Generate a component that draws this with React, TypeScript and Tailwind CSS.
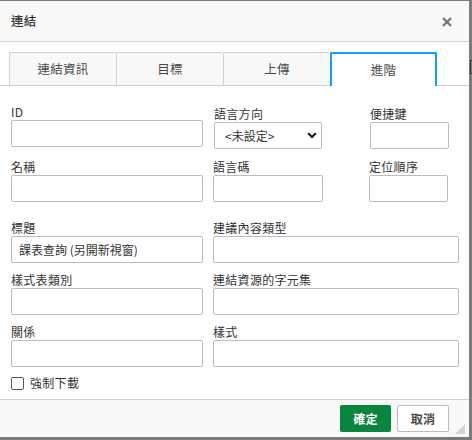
import React from "react";

const font = { fontFamily: '"Noto Sans CJK TC", "Liberation Sans", sans-serif' };

const Field = ({ label, width, value, className = "" }: { label: string; width: string; value?: string; className?: string }) => (
  <div className={`flex flex-col ${className}`}>
    <label className="h-[17px] text-[12px] leading-[17px] text-[#333] tracking-[0.3px]">{label}</label>
    <input
      readOnly
      value={value ?? ""}
      className={`${width} h-[27px] rounded-[2px] border border-[#bcbcbc] bg-white px-[7px] text-[12px] text-[#333] outline-none`}
    />
  </div>
);

const tabs = ["連結資訊", "目標", "上傳", "進階"];

export default function App() {
  return (
    <div className="relative h-[440px] w-[472px] overflow-hidden bg-[#7b7b7b] pt-[1px]" style={font}>
      {/* 後面頁面露出的一角 */}
      <div className="absolute left-[470px] top-[60px] h-[14px] w-[6px] border border-[#333]" />

      <div className="flex h-[436px] w-[469px] flex-col bg-white">
        {/* 標題列 */}
        <div className="flex h-[41px] items-center justify-between border-b border-[#d1d1d1] bg-[#f8f8f8] pl-[11px] pr-[17px]">
          <span className="text-[12.5px] font-medium text-[#333] tracking-[0.3px]">連結</span>
          <svg width="10" height="10" viewBox="0 0 10 10" className="mt-[1px]">
            <path d="M1 1L9 9M9 1L1 9" stroke="#777" strokeWidth="2.4" />
          </svg>
        </div>

        {/* 分頁 */}
        <div className="mt-[10px] flex h-[34px] border-b border-[#d1d1d1] pl-[9px]">
          {tabs.map((t, i) =>
            i === 3 ? (
              <div
                key={t}
                className="-mb-[1px] flex w-[107px] items-center justify-center rounded-t-[2px] border-x-2 border-t-2 border-[#139ff7] bg-white text-[12.5px] text-[#484848] tracking-[0.3px]"
              >
                {t}
              </div>
            ) : (
              <div
                key={t}
                className="flex w-[107px] items-center justify-center rounded-t-[2px] border-l border-t border-[#d1d1d1] bg-[#f8f8f8] text-[12.5px] text-[#484848] tracking-[0.3px]"
              >
                {t}
              </div>
            )
          )}
        </div>

        {/* 內容 */}
        <div className="flex flex-1 flex-col pl-[11px] pt-[17px]">
          <div className="flex">
            <Field label="ID" width="w-[192px]" />
            <div className="ml-[11px] flex flex-col pt-[2px]">
              <label className="h-[17px] text-[12px] leading-[17px] text-[#333] tracking-[0.3px]">語言方向</label>
              <div className="flex h-[27px] w-[108px] items-center justify-between rounded-[2px] border border-[#bcbcbc] bg-white pl-[10px] pr-[4px] text-[12px] text-[#333]">
                <span>&lt;未設定&gt;</span>
                <svg width="10" height="7" viewBox="0 0 10 7">
                  <path d="M1.2 1.3L5 5L8.8 1.3" fill="none" stroke="#111" strokeWidth="2.2" />
                </svg>
              </div>
            </div>
            <Field label="便捷鍵" width="w-[79px]" className="ml-[48px] pt-[2px]" />
          </div>

          <div className="mt-[9px] flex">
            <Field label="名稱" width="w-[192px]" />
            <Field label="語言碼" width="w-[110px]" className="ml-[10px]" />
            <Field label="定位順序" width="w-[79px]" className="ml-[46px]" />
          </div>

          <div className="mt-[17px] flex">
            <Field label="標題" width="w-[192px]" value="課表查詢 (另開新視窗)" />
            <Field label="建議內容類型" width="w-[246px]" className="ml-[10px]" />
          </div>

          <div className="mt-[8px] flex">
            <Field label="樣式表類別" width="w-[192px]" />
            <Field label="連結資源的字元集" width="w-[246px]" className="ml-[10px]" />
          </div>

          <div className="mt-[8px] flex">
            <Field label="關係" width="w-[192px]" />
            <Field label="樣式" width="w-[246px]" className="ml-[10px]" />
          </div>

          <label className="mt-[7px] flex items-center gap-[6px] text-[12px] text-[#333] tracking-[0.3px]">
            <span className="h-[13px] w-[13px] rounded-[2px] border border-[#555] bg-white" />
            強制下載
          </label>
        </div>

        {/* 頁尾 */}
        <div className="relative flex h-[38px] items-start justify-end gap-[6px] border-t border-[#d1d1d1] bg-[#f8f8f8] pr-[20px] pt-[5px]">
          <button className="h-[27px] w-[51px] rounded-[2px] bg-[#09863e] text-[12px] font-bold text-white tracking-[0.3px]">確定</button>
          <button className="h-[27px] w-[52px] rounded-[2px] border border-[#bcbcbc] bg-white text-[12px] font-bold text-[#484848] tracking-[0.3px]">取消</button>
          <svg width="10" height="10" viewBox="0 0 10 10" className="absolute bottom-[3px] right-[4px]">
            <path d="M10 0L10 10L0 10Z" fill="#d3d3d3" />
          </svg>
        </div>
      </div>
    </div>
  );
}
